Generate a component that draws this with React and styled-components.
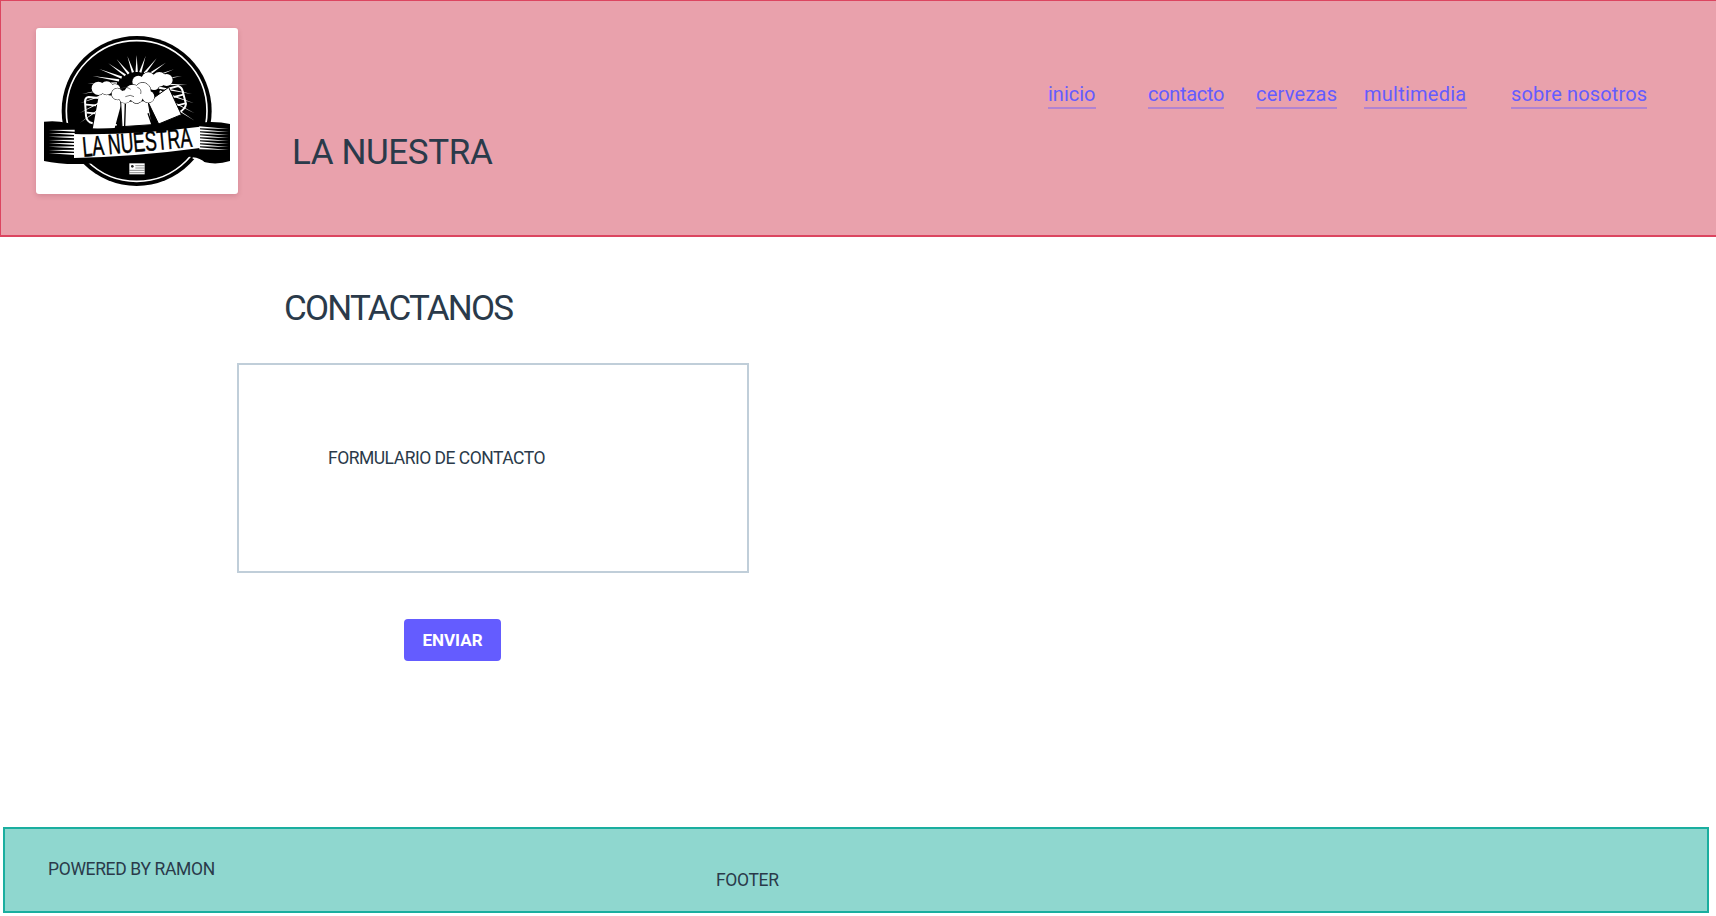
import React from 'react';
import styled, { createGlobalStyle } from 'styled-components';

const GlobalStyle = createGlobalStyle`
  * { box-sizing: border-box; }
  html, body { margin: 0; background: #fff; }
  body {
    font-family: Roboto, "Liberation Sans", sans-serif;
    color: #2a3a4a;
  }
`;

const Page = styled.div`
  display: flex;
  flex-direction: column;
  height: 916px;
  overflow: hidden;
`;

const Header = styled.header`
  display: flex;
  height: 237px;
  padding: 27px 0 0 35px;
  background: #e9a1ac;
  border: 1px solid #dc4560;
  border-right: 0;
  border-bottom-width: 2px;
`;

const LogoCard = styled.div`
  width: 202px;
  height: 166px;
  background: #fff;
  border-radius: 3px;
  box-shadow: 0 2px 5px rgba(120, 40, 60, 0.2);
`;

const SiteTitle = styled.h1`
  margin: 104px 0 0 54px;
  font-size: 35px;
  line-height: 42px;
  font-weight: 400;
  letter-spacing: -0.4px;
  white-space: nowrap;
`;

const Nav = styled.nav`
  display: grid;
  grid-template-columns: 100px 108px 108px 147px 136px;
  margin: 54px 69px 0 auto;
  height: 28px;
`;

const NavLink = styled.a`
  justify-self: start;
  height: 27px;
  font-size: 20px;
  line-height: 24px;
  letter-spacing: ${(p) => p.$spacing}px;
  color: #645cff;
  text-decoration: none;
  border-bottom: 2px solid #b283d0;
  white-space: nowrap;
`;

const Main = styled.main`
  flex: 1;
  padding-top: 55px;
`;

const Heading = styled.h2`
  margin: 0 0 37px 284px;
  font-size: 35px;
  line-height: 34px;
  font-weight: 400;
  letter-spacing: -1.8px;
  white-space: nowrap;
`;

const FormBox = styled.div`
  width: 512px;
  height: 210px;
  margin-left: 237px;
  padding: 83px 0 0 89px;
  border: 2px solid #c0ced9;
  font-size: 17.5px;
  line-height: 20px;
  letter-spacing: -0.5px;
`;

const SendButton = styled.button`
  display: block;
  width: 97px;
  height: 42px;
  margin: 46px 0 0 404px;
  border: 0;
  border-radius: 4px;
  background: #645cff;
  color: #fff;
  font-family: inherit;
  font-size: 17px;
  font-weight: 700;
`;

const Footer = styled.footer`
  display: flex;
  height: 86px;
  margin: 0 7px 3px 3px;
  padding-left: 43px;
  background: #8fd7cf;
  border: 2px solid #1aae9f;
`;

const FooterText = styled.span`
  width: ${(p) => p.$width}px;
  margin-top: ${(p) => p.$top}px;
  font-size: 17.5px;
  line-height: 20px;
  letter-spacing: -0.35px;
  white-space: nowrap;
`;

const rayTips = [
  [240, 368], [238, 340], [240, 310], [246, 282], [262, 250], [278, 228], [298, 207], [325, 190],
  [350, 178], [382, 168], [410, 165], [437, 168], [470, 175], [497, 188], [522, 208], [546, 228],
  [562, 255], [576, 282], [582, 310], [584, 340], [584, 362],
];

// speed lines at the two ends of the ribbon
const leftLines = [392, 402, 412, 422, 432, 442, 452, 462];
const rightLines = [382, 391, 400, 409, 418, 427, 436, 445];

const backFoam = [
  [295, 265, 20], [320, 264, 20], [345, 268, 16],
  [415, 245, 18], [445, 238, 21], [478, 238, 22], [500, 240, 18], [462, 254, 16], [430, 255, 16],
];
const frontFoam = [
  [352, 282, 17], [375, 290, 19], [398, 278, 24], [428, 272, 24], [445, 290, 18], [410, 292, 18],
];

const ray = ([x, y]) => {
  // thin wedge from the tip towards the foam
  const dx = 410 - x;
  const dy = 250 - y;
  const len = Math.hypot(dx, dy);
  const nx = (-dy / len) * 3.5;
  const ny = (dx / len) * 3.5;
  const mx = x + dx * 0.6;
  const my = y + dy * 0.6;
  return `${x},${y} ${mx + nx},${my + ny} ${mx - nx},${my - ny}`;
};

const Blobs = ({ items }) => (
  <>
    <g fill="#000" stroke="#000" strokeWidth="3">
      {items.map(([x, y, r]) => <circle key={`${x}-${y}`} cx={x} cy={y} r={r} />)}
    </g>
    <g fill="#fff">
      {items.map(([x, y, r]) => <circle key={`${x}-${y}`} cx={x} cy={y} r={r} />)}
    </g>
  </>
);

const Logo = () => (
  <svg width="202" height="166" viewBox="108 84 606 498" style={{ display: 'block' }}>
    <circle cx="410" cy="333" r="225" fill="#000" />
    <circle cx="410" cy="333" r="211" fill="none" stroke="#fff" strokeWidth="5" />
    {rayTips.map((t) => (
      <polygon key={t.join()} points={ray(t)} fill="#fff" />
    ))}
    <g fill="none" stroke="#fff" strokeWidth="6">
      <path d="M296 294 L266 291 Q256 292 255 304 L258 348 Q260 366 278 370" />
      <path d="M288 316 L258 314 M286 340 L260 338" strokeWidth="5" />
      <path d="M505 266 L534 258 Q546 262 548 274 L558 312 Q556 328 536 338" />
      <path d="M516 292 L550 284 M524 318 L556 310" strokeWidth="5" />
      <path d="M362 316 L340 318 Q332 320 332 332 L336 368 L350 376" strokeWidth="5" />
    </g>
    <polygon points="298,278 368,296 344,384 278,388" fill="#fff" />
    <polygon points="444,306 506,262 544,344 476,372" fill="#fff" stroke="#000" strokeWidth="3" />
    <polygon points="362,304 444,302 456,374 366,380" fill="#fff" stroke="#000" strokeWidth="3" />
    <path d="M376 312 L374 378 M450 330 L470 372 M444 340 L456 374" stroke="#000" strokeWidth="4" fill="none" />
    <Blobs items={backFoam} />
    <Blobs items={frontFoam} />
    <path
      d="M362 268 Q376 256 392 268 M412 262 Q426 266 422 282 M376 290 Q392 282 402 290"
      fill="none"
      stroke="#333"
      strokeWidth="2"
    />
    <path
      d="M132 365 Q190 358 250 384 Q420 392 595 368 Q650 362 690 372 L690 483 Q650 496 612 486 Q590 474 570 470 Q400 482 250 492 Q180 494 132 483 Z"
      fill="#000"
    />
    <path d="M222 402 Q400 406 600 380 L600 444 Q410 470 222 474 Z" fill="#fff" />
    {leftLines.map((y) => (
      <polygon key={y} points={`146,${y - 2} 224,${y - 3} 224,${y + 3}`} fill="#fff" />
    ))}
    {rightLines.map((y) => (
      <polygon key={y} points={`686,${y + 5} 598,${y - 3} 598,${y + 3}`} fill="#fff" />
    ))}
    <path d="M578 474 Q600 476 614 490" fill="none" stroke="#fff" strokeWidth="4" />
    <text
      transform="translate(250 470) rotate(-5.2) scale(0.63 1)"
      fontFamily="'Liberation Sans', sans-serif"
      fontSize="84"
      stroke="#000"
      strokeWidth="1.5"
      fill="#000"
    >
      LA NUESTRA
    </text>
    <rect x="388" y="490" width="46" height="33" fill="#fff" />
    <path d="M406 497 H434 M406 504 H434 M388 511 H434 M388 518 H434" stroke="#555" strokeWidth="2" />
    <circle cx="397" cy="499" r="4" fill="#222" />
  </svg>
);

const links = [
  { label: 'inicio', spacing: 0 },
  { label: 'contacto', spacing: -0.3 },
  { label: 'cervezas', spacing: 0.25 },
  { label: 'multimedia', spacing: 0.25 },
  { label: 'sobre nosotros', spacing: 0.15 },
];

export default function App() {
  return (
    <Page>
      <GlobalStyle />
      <Header>
        <LogoCard>
          <Logo />
        </LogoCard>
        <SiteTitle>LA NUESTRA</SiteTitle>
        <Nav>
          {links.map((l) => (
            <NavLink key={l.label} href="#" $spacing={l.spacing}>
              {l.label}
            </NavLink>
          ))}
        </Nav>
      </Header>
      <Main>
        <Heading>CONTACTANOS</Heading>
        <FormBox>FORMULARIO DE CONTACTO</FormBox>
        <SendButton>ENVIAR</SendButton>
      </Main>
      <Footer>
        <FooterText $width={668} $top={30}>POWERED BY RAMON</FooterText>
        <FooterText $width={100} $top={41}>FOOTER</FooterText>
      </Footer>
    </Page>
  );
}
